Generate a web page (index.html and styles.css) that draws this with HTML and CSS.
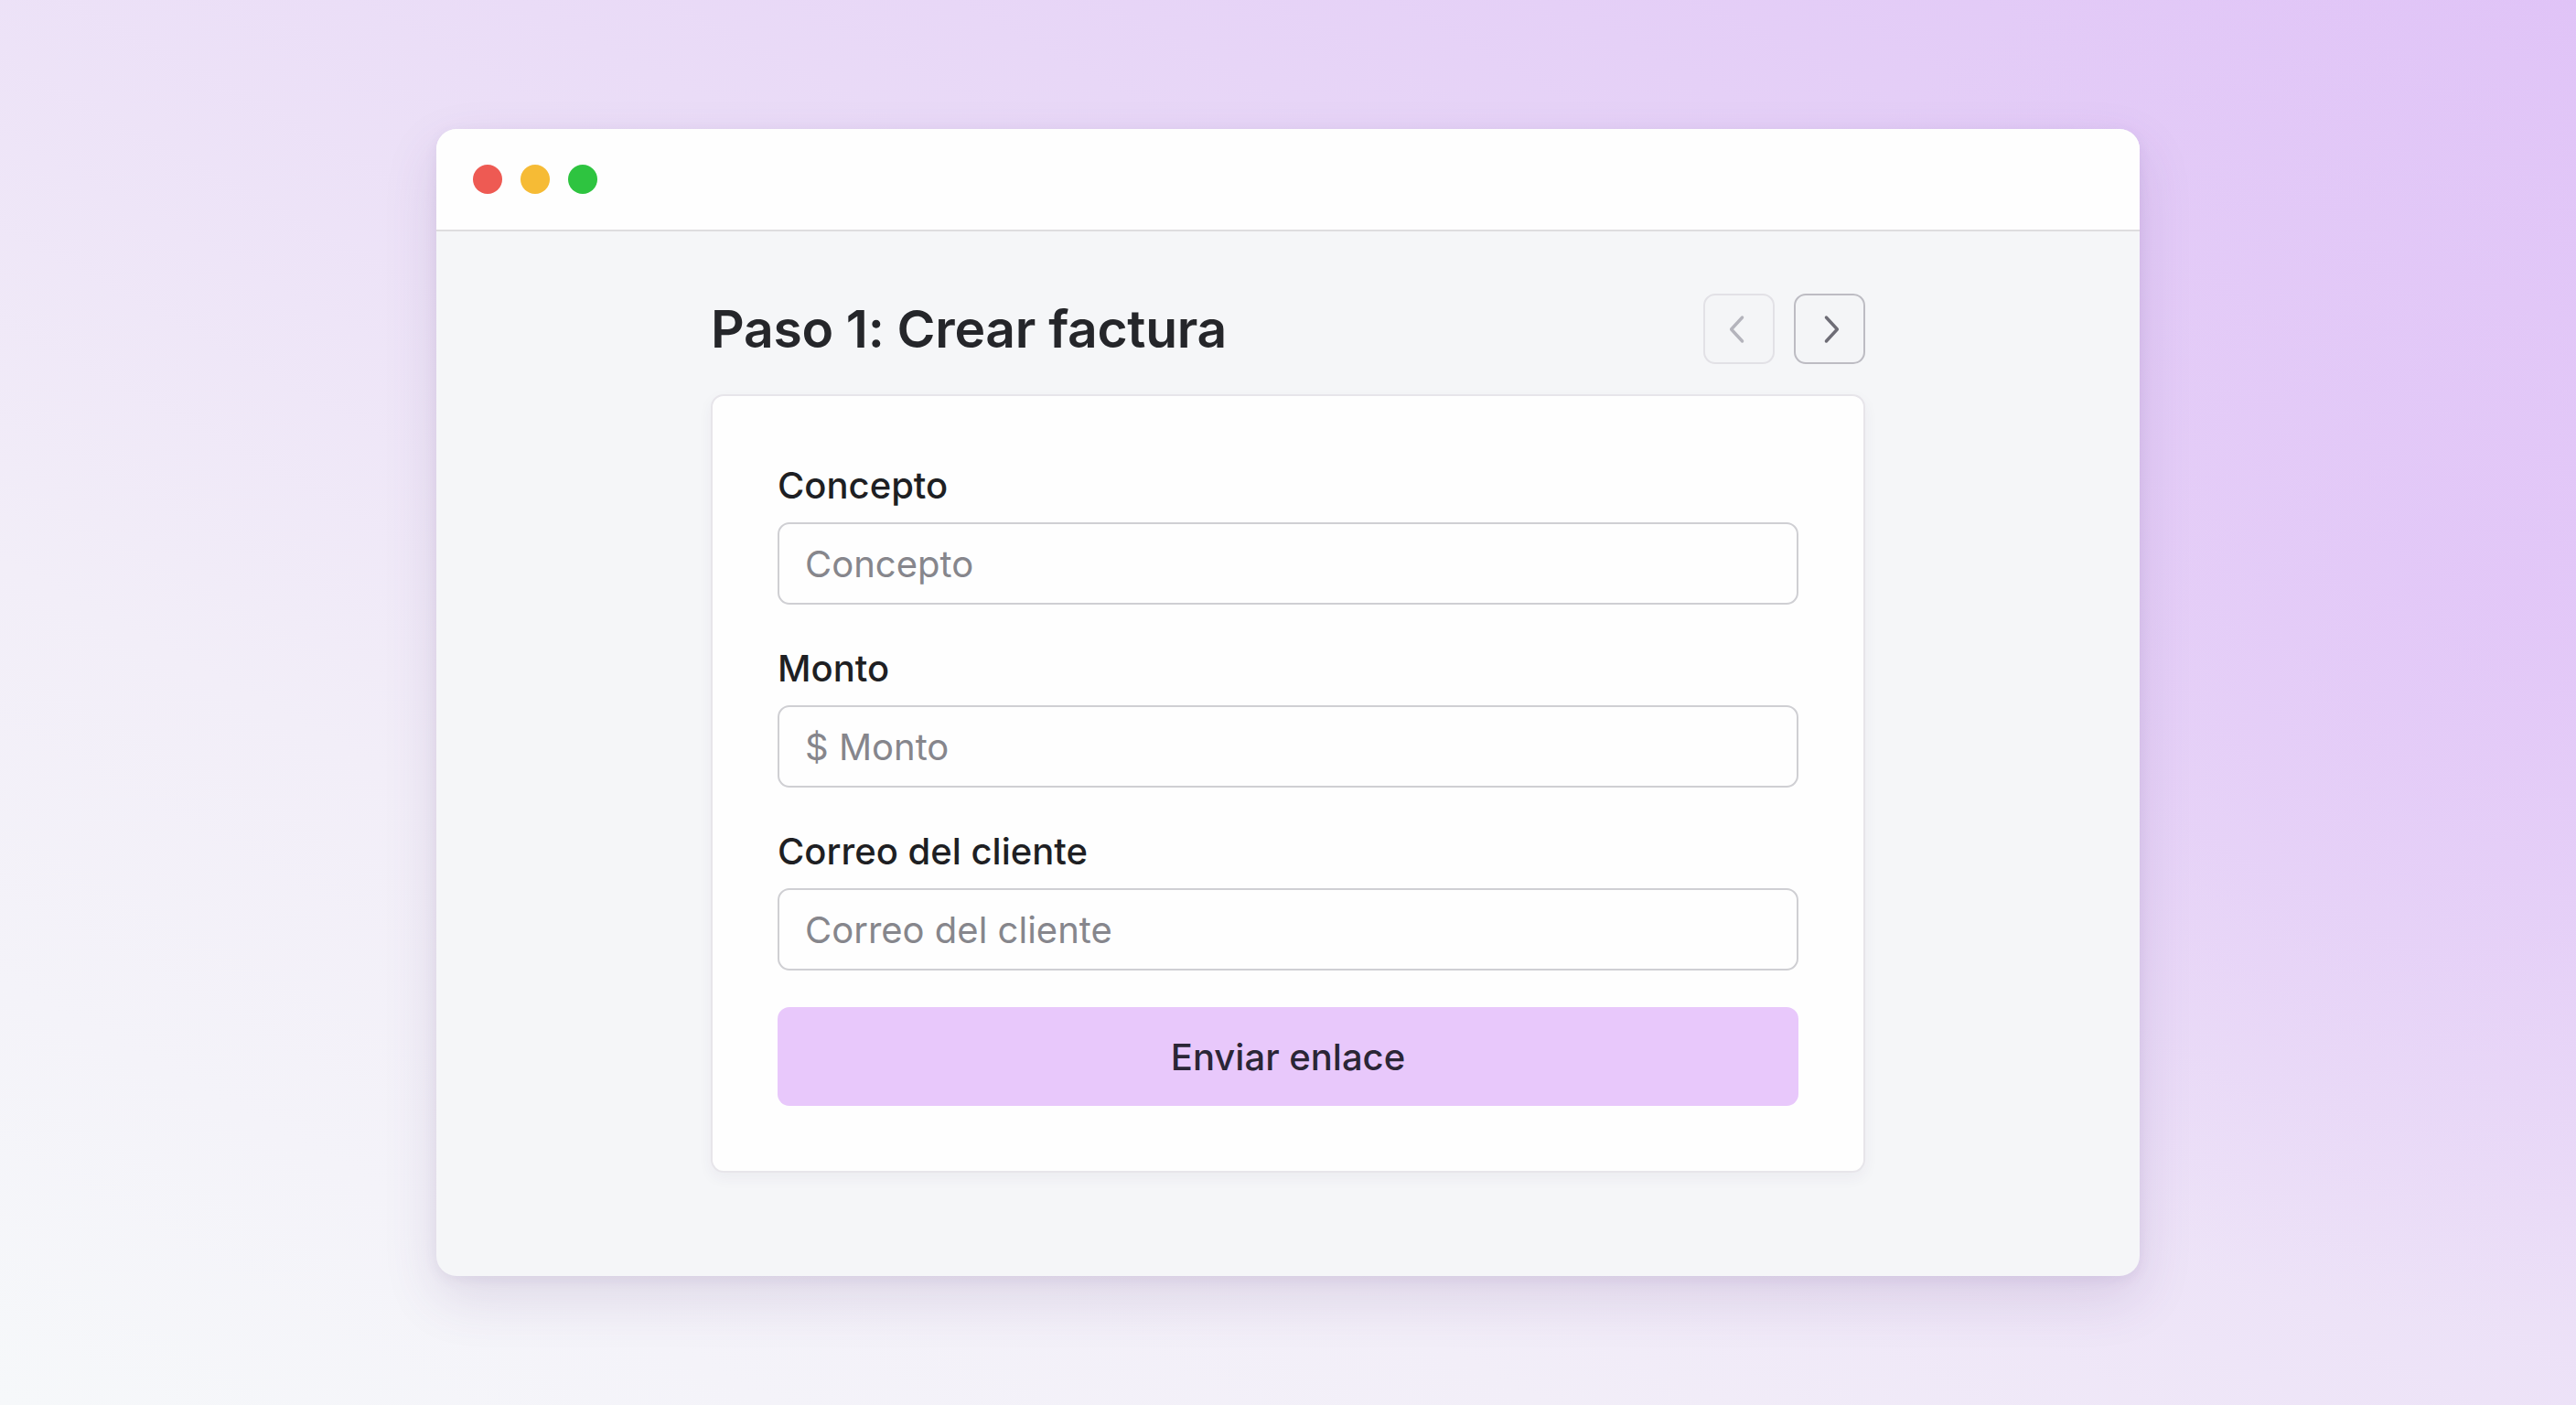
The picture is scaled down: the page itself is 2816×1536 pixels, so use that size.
FILE: index.html
```html
<!DOCTYPE html>
<html lang="es">
<head>
<meta charset="utf-8">
<title>Paso 1: Crear factura</title>
<link rel="stylesheet" href="styles.css">
</head>
<body>
<div class="stage">
  <div class="window">
    <div class="titlebar">
      <span class="dot dot-red"></span>
      <span class="dot dot-yellow"></span>
      <span class="dot dot-green"></span>
    </div>
    <div class="content">
      <div class="column">
        <div class="head">
          <h1 class="title">Paso 1: Crear factura</h1>
          <div class="nav">
            <button class="nav-btn nav-btn-disabled" aria-label="Anterior">
              <svg viewBox="0 0 24 24" width="48" height="48"><path d="M13.8 5.5 L7.8 12 L13.8 18.5" fill="none" stroke="currentColor" stroke-width="1.7" stroke-linecap="round" stroke-linejoin="round"/></svg>
            </button>
            <button class="nav-btn" aria-label="Siguiente">
              <svg viewBox="0 0 24 24" width="48" height="48"><path d="M10.2 5.5 L16.2 12 L10.2 18.5" fill="none" stroke="currentColor" stroke-width="1.7" stroke-linecap="round" stroke-linejoin="round"/></svg>
            </button>
          </div>
        </div>
        <div class="card">
          <div class="field">
            <label class="label">Concepto</label>
            <div class="input"><span class="placeholder">Concepto</span></div>
          </div>
          <div class="field">
            <label class="label">Monto</label>
            <div class="input"><span class="placeholder">$ Monto</span></div>
          </div>
          <div class="field">
            <label class="label">Correo del cliente</label>
            <div class="input"><span class="placeholder">Correo del cliente</span></div>
          </div>
          <button class="submit">Enviar enlace</button>
        </div>
      </div>
    </div>
  </div>
</div>
</body>
</html>
```
FILE: styles.css
```css
* { box-sizing: border-box; }
html, body { margin: 0; padding: 0; }
body {
  width: 2816px;
  height: 1536px;
  overflow: hidden;
  font-family: "Inter", "Noto Sans", sans-serif;
  background:
    radial-gradient(ellipse 900px 800px at 2750px 650px, rgba(224, 192, 248, 0.6), rgba(224, 192, 248, 0) 100%),
    linear-gradient(to top right, #f6f8fa 0%, #f2eef8 30%, #eadcf7 60%, #e0c4f7 100%);
}
.stage {
  width: 2816px;
  height: 1536px;
  display: flex;
  align-items: center;
  justify-content: center;
}
.window {
  width: 1862px;
  height: 1254px;
  border-radius: 22px;
  background: #f5f6f8;
  box-shadow: 0 24px 60px rgba(90, 60, 130, 0.14), 0 4px 14px rgba(90, 60, 130, 0.08);
  overflow: hidden;
  display: flex;
  flex-direction: column;
}
.titlebar {
  height: 112px;
  flex: none;
  background: #fefefe;
  border-bottom: 2px solid #dedddf;
  display: flex;
  align-items: center;
  gap: 20px;
  padding-left: 40px;
}
.dot {
  width: 32px;
  height: 32px;
  border-radius: 50%;
  display: block;
}
.dot-red { background: #ee5a53; }
.dot-yellow { background: #f6bb35; }
.dot-green { background: #2ec440; }
.content {
  flex: 1;
  display: flex;
  justify-content: center;
  padding-top: 68px;
}
.column {
  width: 1262px;
  display: flex;
  flex-direction: column;
  gap: 33px;
}
.head {
  height: 77px;
  display: flex;
  align-items: center;
  justify-content: space-between;
}
.title {
  margin: 0;
  font-size: 57px;
  font-weight: 600;
  color: #25262a;
  letter-spacing: -0.3px;
}
.nav {
  display: flex;
  gap: 21px;
}
.nav-btn {
  width: 78px;
  height: 77px;
  border-radius: 13px;
  border: 2px solid #bdbcc3;
  background: #f4f5f7;
  color: #6e6d76;
  display: flex;
  align-items: center;
  justify-content: center;
  padding: 0;
}
.nav-btn-disabled {
  border-color: #e2e1e6;
  color: #b4b4bc;
}
.card {
  background: #fefefe;
  border: 2px solid #e7e5ea;
  border-radius: 14px;
  box-shadow: 0 6px 16px rgba(60, 40, 90, 0.05);
  padding: 74px 71px 71px;
  display: flex;
  flex-direction: column;
  gap: 46px;
}
.field {
  display: flex;
  flex-direction: column;
  gap: 16px;
}
.label {
  font-size: 40px;
  line-height: 48px;
  font-weight: 450;
  color: #1e1f23;
}
.input {
  height: 90px;
  border: 2px solid #cfcfd3;
  border-radius: 13px;
  background: #fefefe;
  display: flex;
  align-items: center;
  padding-left: 28px;
}
.placeholder {
  font-size: 40px;
  color: #86868c;
}
.submit {
  margin-top: -6px;
  height: 108px;
  border: none;
  border-radius: 13px;
  background: #e8c8fb;
  color: #2b2636;
  font-family: "Inter", "Noto Sans", sans-serif;
  font-size: 40px;
  font-weight: 450;
}
```
